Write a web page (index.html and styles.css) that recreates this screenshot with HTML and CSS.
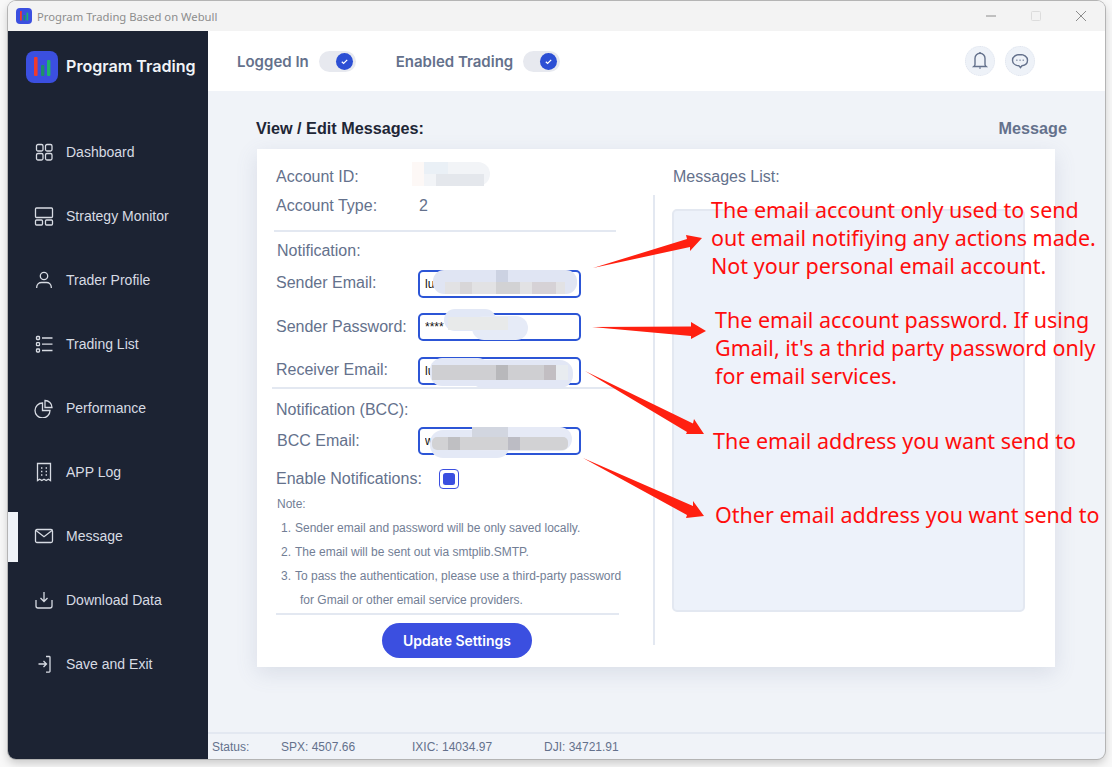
FILE: index.html
```html
<!DOCTYPE html>
<html lang="en">
<head>
<meta charset="utf-8">
<title>Program Trading Based on Webull</title>
<link rel="stylesheet" href="styles.css">
</head>
<body>
<div class="window">
  <header class="titlebar">
    <svg class="title-logo" viewBox="0 0 32 32"><rect width="32" height="32" rx="8" fill="#3b4fe0"/><rect x="8" y="6" width="3.6" height="19" rx="1" fill="#f03a2e"/><rect x="15" y="14" width="3.4" height="11" rx="1" fill="#1f8f6a"/><rect x="21" y="9" width="3.4" height="16" rx="1" fill="#1fb36a"/></svg>
    <span class="title-text">Program Trading Based on Webull</span>
    <div class="win-controls">
      <svg class="win-btn" viewBox="0 0 10 10"><path d="M0 5h10" stroke="#8c8c8c"/></svg>
      <svg class="win-btn" viewBox="0 0 10 10"><rect x=".5" y=".5" width="9" height="9" rx="1" fill="none" stroke="#dcdcdc"/></svg>
      <svg class="win-btn" viewBox="0 0 10 10"><path d="M0 0l10 10M10 0L0 10" stroke="#8c8c8c"/></svg>
    </div>
  </header>
  <div class="app">
    <aside class="sidebar">
      <div class="brand">
        <svg class="brand-logo" viewBox="0 0 32 32"><rect width="32" height="32" rx="8" fill="#3b4fe0"/><rect x="8" y="6" width="3.6" height="19" rx="1" fill="#f03a2e"/><rect x="15" y="14" width="3.4" height="11" rx="1" fill="#1f8f6a"/><rect x="21" y="9" width="3.4" height="16" rx="1" fill="#1fb36a"/></svg>
        <span class="brand-name">Program Trading</span>
      </div>
      <nav class="nav">
        <a class="nav-item"><svg class="nav-icon" viewBox="0 0 20 20"><rect x="2.500" y="2.500" width="6.500" height="6.500" rx="1.500"/><rect x="11.500" y="2.500" width="6.500" height="6.500" rx="1.500"/><rect x="2.500" y="11.500" width="6.500" height="6.500" rx="1.500"/><rect x="11.500" y="11.500" width="6.500" height="6.500" rx="1.500"/></svg>Dashboard</a>
        <a class="nav-item"><svg class="nav-icon" viewBox="0 0 20 20"><rect x="1.500" y="2" width="17" height="9.500" rx="1"/><rect x="1.500" y="14" width="7" height="5" rx="1"/><rect x="11.500" y="14" width="7" height="5" rx="1"/></svg>Strategy Monitor</a>
        <a class="nav-item"><svg class="nav-icon" viewBox="0 0 20 20"><circle cx="10" cy="6" r="3.700"/><path d="M2.700 18v-1a4.800 4.800 0 0 1 4.800-4.500h5a4.800 4.800 0 0 1 4.800 4.500v1"/></svg>Trader Profile</a>
        <a class="nav-item"><svg class="nav-icon" viewBox="0 0 20 20"><rect x="2.500" y="2.500" width="3" height="3" rx=".7"/><rect x="2.500" y="8.700" width="3" height="3" rx=".7"/><rect x="2.500" y="15" width="3" height="3" rx=".7"/><path d="M8 4h10.500M8 10.200h10.500M8 16.500h10.500"/></svg>Trading List</a>
        <a class="nav-item"><svg class="nav-icon" viewBox="0 0 20 20"><path d="M8.500 5a7.500 7.500 0 1 0 7.500 7.500H8.500z"/><path d="M11 2.500a7 7 0 0 1 7 7h-7z"/></svg>Performance</a>
        <a class="nav-item"><svg class="nav-icon" viewBox="0 0 20 20"><path d="M3.500 1.500h13v17l-2.200-1.300-2.100 1.300-2.200-1.300-2.200 1.300-2.100-1.300-2.200 1.300z"/><path class="dots" d="M7 6h1.400M11.600 6H13M7 9.500h1.400M11.600 9.500H13M7 13h1.400M11.600 13H13"/></svg>APP Log</a>
        <a class="nav-item active"><svg class="nav-icon" viewBox="0 0 20 20"><rect x="1.500" y="3.500" width="17" height="13" rx="1.500"/><path d="M2 4.500l8 6.200 8-6.200"/></svg>Message</a>
        <a class="nav-item"><svg class="nav-icon" viewBox="0 0 20 20"><path d="M10 2v9.500M6.500 8l3.500 3.500L13.500 8"/><path d="M2 10v6a2 2 0 0 0 2 2h12a2 2 0 0 0 2-2v-6"/></svg>Download Data</a>
        <a class="nav-item"><svg class="nav-icon" viewBox="0 0 20 20"><path d="M12 2.500h3.200a.8.8 0 0 1 .8.8v14a.8.8 0 0 1-.8.8H12"/><path d="M4.500 10h8M9.500 7l3 3-3 3"/></svg>Save and Exit</a>
      </nav>
    </aside>
    <main class="main">
      <div class="topbar">
        <span class="switch-label">Logged In</span>
        <span class="toggle"><span class="knob"><svg viewBox="0 0 10 10" class="check"><path d="M2 5.200l2 2 4-4"/></svg></span></span>
        <span class="switch-label second">Enabled Trading</span>
        <span class="toggle"><span class="knob"><svg viewBox="0 0 10 10" class="check"><path d="M2 5.200l2 2 4-4"/></svg></span></span>
        <div class="top-actions">
          <span class="round-btn"><svg viewBox="0 0 20 20" class="round-icon"><path d="M10 2.200a5 5 0 0 0-5 5v6.300c0 .8-.6 1.500-1.200 2h12.400c-.6-.5-1.200-1.200-1.200-2V7.200a5 5 0 0 0-5-5z"/><path d="M10 1v1.200M9.300 17h1.400"/></svg></span>
          <span class="round-btn"><svg viewBox="0 0 20 20" class="round-icon"><path d="M10 3.500c-4.300 0-7.500 2.400-7.500 5.700 0 3 2.800 5.300 6.500 5.600l1.500 1.900 1.500-2c3.400-.4 5.500-2.700 5.500-5.500 0-3.300-3.200-5.700-7.500-5.700z"/><path class="chat-dots" d="M6.200 9.300h1.300M9.400 9.300h1.300M12.600 9.300h1.300"/></svg></span>
        </div>
      </div>
      <section class="content">
        <div class="content-head">
          <h1 class="page-title">View / Edit Messages:</h1>
          <span class="crumb">Message</span>
        </div>
        <div class="card">
          <form class="form">
            <div class="info-row"><span class="label">Account ID:</span></div>
            <div class="info-row"><span class="label">Account Type:</span><span class="value">2</span></div>
            <hr class="rule rule-a">
            <div class="group-title">Notification:</div>
            <div class="field-row lift"><label class="label">Sender Email:</label><input class="field" value="lu."></div>
            <div class="field-row gap-15"><label class="label">Sender Password:</label><input class="field" value="****"></div>
            <div class="field-row gap-16 lift"><label class="label">Receiver Email:</label><input class="field" value="lu"></div>
            <hr class="rule rule-b">
            <div class="group-title bcc-title">Notification (BCC):</div>
            <div class="field-row bcc-row"><label class="label">BCC Email:</label><input class="field" value="w"></div>
            <div class="check-row"><span class="label">Enable Notifications:</span><span class="checkbox"><span class="checkbox-fill"></span></span></div>
            <div class="note-title">Note:</div>
            <ol class="notes">
              <li>Sender email and password will be only saved locally.</li>
              <li>The email will be sent out via smtplib.SMTP.</li>
              <li>To pass the authentication, please use a third-party password</li>
              <li class="cont">for Gmail or other email service providers.</li>
            </ol>
            <hr class="rule rule-c">
            <button type="button" class="submit">Update Settings</button>
          </form>
          <div class="divider"></div>
          <div class="messages">
            <div class="messages-title">Messages List:</div>
            <div class="messages-box"></div>
          </div>
        </div>
      </section>
      <footer class="statusbar">
        <span class="st st-label">Status:</span>
        <span class="st st-spx">SPX: 4507.66</span>
        <span class="st st-ixic">IXIC: 14034.97</span>
        <span class="st">DJI: 34721.91</span>
      </footer>
    </main>
  </div>
</div>

<svg class="overlay" viewBox="0 0 1112 767" aria-hidden="true">
  <!-- redaction: account id -->
  <rect x="412" y="162" width="78" height="24" rx="12" fill="#f2f4f7"/>
  <rect x="412" y="162" width="12" height="24" fill="#fdf8f6"/>
  <rect x="436" y="174" width="48" height="12" fill="#e4e7ec"/>
  <rect x="424" y="162" width="24" height="12" fill="#eaf0f6"/>
  <!-- redaction: sender email -->
  <rect x="433" y="270" width="144" height="24" rx="11" fill="#e0e5f3"/>
  <rect x="496" y="270" width="12" height="12" fill="#ccd2e2"/>
  <rect x="445" y="282" width="120" height="12" fill="#e2e2e4"/>
  <rect x="460" y="282" width="12" height="12" fill="#d8d6d8"/>
  <rect x="496" y="282" width="24" height="12" fill="#d2d2d4"/>
  <rect x="532" y="282" width="24" height="12" fill="#d6d2d6"/>
  <!-- redaction: password -->
  <rect x="444" y="309" width="52" height="22" rx="11" fill="#e2e8f6"/>
  <rect x="472" y="316" width="56" height="24" rx="12" fill="#e6ebf7"/>
  <rect x="448" y="317" width="60" height="13" fill="#e8eaea"/>
  <!-- redaction: receiver email -->
  <rect x="430" y="358" width="60" height="28" rx="12" fill="#e2e7f5"/>
  <rect x="470" y="360" width="103" height="28" rx="13" fill="#e2e7f5"/>
  <rect x="432" y="365" width="124" height="15" fill="#cfcfd2"/>
  <rect x="496" y="365" width="12" height="15" fill="#b8b8bb"/>
  <rect x="544" y="365" width="12" height="15" fill="#c2bec2"/>
  <rect x="556" y="365" width="12" height="15" fill="#e8ecf0"/>
  <!-- redaction: bcc -->
  <rect x="430" y="430" width="80" height="28" rx="13" fill="#e4e9f6"/>
  <rect x="470" y="427" width="102" height="24" rx="12" fill="#e6eaf6"/>
  <rect x="472" y="427" width="36" height="10" fill="#d2d6e0"/>
  <rect x="432" y="437" width="136" height="13" rx="5" fill="#d2d2d4"/>
  <rect x="448" y="437" width="12" height="13" fill="#bfbfc2"/>
  <rect x="508" y="437" width="12" height="13" fill="#bcbcc4"/>
  <!-- arrows -->
  <g fill="#ff2010">
    <polygon points="593,268 687,239 686,235 702,238 690,251 690,247"/>
    <polygon points="592,327 691,326.500 691,322 706,331 691,339 691,336"/>
    <polygon points="585,371 693,423.500 694,419 704,434 686,434 687,432"/>
    <polygon points="583,458 693,506 693,501 704,516 686,518 687,515"/>
  </g>
</svg>
<div class="note note-a">The email account only used to send<br>out email notifiying any actions made.<br>Not your personal email account.</div>
<div class="note note-b">The email account password. If using<br>Gmail, it's a thrid party password only<br>for email services.</div>
<div class="note note-c">The email address you want send to</div>
<div class="note note-d">Other email address you want send to</div>
</body>
</html>
```
FILE: styles.css
```css
* { box-sizing: border-box; }
html, body { margin: 0; height: 100%; }
body {
  position: relative;
  width: 1112px;
  height: 767px;
  overflow: hidden;
  background: #f8f8f8;
  font-family: "Liberation Sans", Arial, sans-serif;
  color: #64718c;
}
.window {
  width: 1097px;
  height: 758px;
  margin: 1px 0 0 8px;
  border-radius: 8px;
  overflow: hidden;
  display: flex;
  flex-direction: column;
  background: #f0f3f8;
  box-shadow: 0 0 0 1px #b4b4b4, 0 4px 10px rgba(0, 0, 0, .2);
}
.titlebar {
  height: 30px;
  flex: none;
  display: flex;
  align-items: center;
  padding-left: 8px;
  background: #f3f3f3;
}
.title-logo { width: 16px; height: 16px; }
.title-text {
  margin-left: 5px;
  font-family: "Noto Sans", sans-serif;
  font-size: 11.250px;
  color: #8d8d8d;
}
.win-controls {
  margin-left: auto;
  display: flex;
  gap: 35px;
  padding-right: 19px;
}
.win-btn { width: 10px; height: 10px; display: block; }
.app { flex: 1; display: flex; min-height: 0; }

.sidebar { width: 200px; flex: none; background: #1c2333; }
.brand {
  height: 89px;
  padding: 20px 0 0 18px;
  display: flex;
  align-items: flex-start;
  gap: 8px;
}
.brand-logo { width: 32px; height: 32px; }
.brand-name {
  font-family: Inter, sans-serif;
  font-size: 16.100px;
  font-weight: 600;
  line-height: 31px;
  color: #f1f3f7;
}
.nav { display: flex; flex-direction: column; }
.nav-item {
  position: relative;
  height: 64px;
  display: flex;
  align-items: center;
  gap: 12px;
  padding-left: 26px;
  font-size: 14px;
  color: #d7dbe3;
}
.nav-item.active::before {
  content: "";
  position: absolute;
  left: 0;
  top: 8px;
  width: 10px;
  height: 50px;
  background: #f0f3f8;
}
.nav-icon {
  width: 20px;
  height: 20px;
  flex: none;
  fill: none;
  stroke: #d7dbe3;
  stroke-width: 1.300;
}
.nav-icon .dots { stroke-width: 1.400; }

.main { flex: 1; min-width: 0; display: flex; flex-direction: column; }
.topbar {
  height: 60px;
  flex: none;
  display: flex;
  align-items: center;
  padding-left: 29px;
  background: #fff;
}
.switch-label {
  font-family: Inter, sans-serif;
  font-size: 15px;
  font-weight: 600;
  color: #64718c;
}
.switch-label.second { margin-left: 40px; }
.toggle {
  width: 37px;
  height: 21px;
  margin-left: 10px;
  padding: 2px 3px 2px 2px;
  display: flex;
  justify-content: flex-end;
  align-items: center;
  border-radius: 11px;
  background: #e7e9ef;
}
.knob {
  width: 17px;
  height: 17px;
  display: flex;
  align-items: center;
  justify-content: center;
  border-radius: 50%;
  background: #2c4fd4;
}
.check { width: 9px; height: 9px; fill: none; stroke: #fff; stroke-width: 1.400; }
.top-actions { margin-left: auto; margin-right: 70px; display: flex; gap: 10px; }
.round-btn {
  width: 30px;
  height: 30px;
  display: flex;
  align-items: center;
  justify-content: center;
  border-radius: 50%;
  background: #eef2f8;
  border: 1px dotted #dfe4ee;
}
.round-icon { width: 20px; height: 20px; fill: none; stroke: #64718c; stroke-width: 1.400; }
.round-icon .chat-dots { stroke-width: 1.500; stroke: #8a95ab; }

.content { flex: 1; padding-left: 48px; min-height: 0; }
.content-head {
  display: flex;
  align-items: center;
  justify-content: space-between;
  height: 22px;
  margin-top: 26px;
  padding-right: 38px;
}
.page-title {
  margin: 0;
  font-size: 16.200px;
  font-weight: 700;
  color: #1e2636;
}
.crumb { padding-top: 1px; font-size: 16.200px; font-weight: 700; color: #64718c; }
.card {
  width: 798px;
  height: 518px;
  margin: 10px 0 0 1px;
  display: flex;
  background: #fff;
  box-shadow: 0 6px 20px rgba(100, 115, 150, .16);
}
.form { width: 396px; flex: none; padding: 13px 0 0 19px; display: flex; flex-direction: column; align-items: flex-start; }
.label { font-size: 16px; color: #64718c; }
.info-row { height: 29px; display: flex; align-items: center; }
.info-row .label { width: 143px; }
.value { font-size: 16px; color: #64718c; }
.rule { margin: 0; border: 0; height: 2px; background: #e3e8f1; }
.rule-a { width: 342px; margin: 10px 0 0 -2px; }
.rule-b { width: 343px; margin: 2px 0 0 -4px; }
.rule-c { width: 343px; margin-top: 1px; }
.group-title { height: 36px; padding-top: 2px; display: flex; align-items: center; font-size: 16px; color: #64718c; margin-left: 1px; }
.bcc-title { height: 38px; padding-top: 3px; margin-left: 0; }
.field-row { display: flex; align-items: center; height: 28px; margin-top: 2px; }
.field-row .label { width: 142px; }
.lift .label { padding-bottom: 2px; }
.gap-15 { margin-top: 15px; }
.gap-16 { margin-top: 16px; }
.bcc-row { margin-top: 0; }
.bcc-row .label { margin-left: 1px; width: 141px; }
.field {
  width: 163px;
  height: 28px;
  padding: 0 5px;
  border: 2px solid #2c55d6;
  border-radius: 5px;
  font: 12px "Liberation Sans", Arial, sans-serif;
  color: #111;
  background: #fff;
  outline: none;
}
.check-row { height: 20px; margin-top: 14px; display: flex; align-items: center; }
.check-row .label { width: 163px; }
.checkbox {
  width: 20px;
  height: 20px;
  display: flex;
  align-items: center;
  justify-content: center;
  border: 1.500px solid #3b4fe0;
  border-radius: 4px;
}
.checkbox-fill { width: 12px; height: 12px; border-radius: 2.500px; background: #3b4fe0; }
.note-title { height: 27px; padding-top: 8px; font-size: 12px; margin-left: 1px; color: #727e95; }
.notes {
  margin: 0;
  padding: 0 0 0 19px;
  font-size: 12px;
  color: #727e95;
  list-style: none;
  counter-reset: n;
}
.notes li { position: relative; height: 24px; line-height: 24px; counter-increment: n; }
.notes li::before {
  content: counter(n) ".";
  position: absolute;
  left: -14px;
}
.notes li.cont::before { content: none; }
.notes li.cont { padding-left: 5px; }
.submit {
  width: 150px;
  height: 35px;
  margin: 8px 0 0 106px;
  border: 0;
  border-radius: 18px;
  background: #3b4fe0;
  color: #fff;
  font: 600 14px Inter, sans-serif;
}
.divider { width: 2px; height: 450px; margin-top: 46px; flex: none; background: #e3e8f1; }
.messages { flex: 1; padding-left: 17px; }
.messages-title { height: 29px; margin-top: 13px; display: flex; align-items: center; margin-left: 1px; font-size: 16px; color: #64718c; }
.messages-box {
  width: 353px;
  height: 403px;
  margin-top: 18px;
  border: 2px solid #e3e8f1;
  border-radius: 5px;
  background: #edf2fa;
}
.statusbar {
  height: 27px;
  flex: none;
  display: flex;
  align-items: center;
  padding-left: 4px;
  border-top: 2px solid #e3e8f1;
  font-size: 12px;
  color: #64718c;
}
.st-label { width: 69px; }
.st-spx { width: 131px; }
.st-ixic { width: 132px; }

.overlay { position: absolute; left: 0; top: 0; width: 1112px; height: 767px; pointer-events: none; }
.note {
  position: absolute;
  font-family: "Noto Sans", sans-serif;
  font-size: 21.500px;
  line-height: 28px;
  color: #ff0d0d;
  white-space: nowrap;
}
.note-a { left: 711px; top: 196px; }
.note-b { left: 715px; top: 306px; }
.note-c { left: 713px; top: 427px; }
.note-d { left: 715px; top: 501px; }
```
